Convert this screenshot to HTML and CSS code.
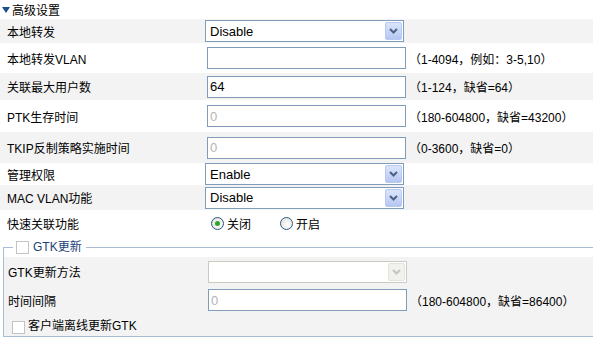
FILE: index.html
```html
<!DOCTYPE html>
<html lang="zh-CN">
<head>
    <meta charset="UTF-8">
    <meta name="viewport" content="width=device-width, initial-scale=1.0">
    <title>高级设置</title>
    <link rel="stylesheet" href="styles.css">
</head>
<body>
<div class="page">
    <div class="section-title"><span class="tri"></span>高级设置</div>

    <table class="form">
        <tr class="alt">
            <td class="lbl">本地转发</td>
            <td><div class="select"><span>Disable</span><span class="arrow"><svg width="9" height="6" viewBox="0 0 9 6"><path d="M1 1 L4.5 4.5 L8 1" /></svg></span></div></td>
        </tr>
        <tr>
            <td class="lbl">本地转发VLAN</td>
            <td><input class="text-input" type="text" value=""><span class="hint">（1-4094，例如：3-5,10）</span></td>
        </tr>
        <tr class="alt">
            <td class="lbl">关联最大用户数</td>
            <td><input class="text-input" type="text" value="64"><span class="hint">（1-124，缺省=64）</span></td>
        </tr>
        <tr>
            <td class="lbl">PTK生存时间</td>
            <td><input class="text-input off" type="text" value="0" readonly><span class="hint">（180-604800，缺省=43200）</span></td>
        </tr>
        <tr class="alt">
            <td class="lbl">TKIP反制策略实施时间</td>
            <td><input class="text-input off" type="text" value="0" readonly><span class="hint">（0-3600，缺省=0）</span></td>
        </tr>
        <tr>
            <td class="lbl">管理权限</td>
            <td><div class="select"><span>Enable</span><span class="arrow"><svg width="9" height="6" viewBox="0 0 9 6"><path d="M1 1 L4.5 4.5 L8 1" /></svg></span></div></td>
        </tr>
        <tr class="alt">
            <td class="lbl">MAC VLAN功能</td>
            <td><div class="select"><span>Disable</span><span class="arrow"><svg width="9" height="6" viewBox="0 0 9 6"><path d="M1 1 L4.5 4.5 L8 1" /></svg></span></div></td>
        </tr>
        <tr>
            <td class="lbl">快速关联功能</td>
            <td>
                <div class="radios">
                    <span class="radio"><span class="dot on"></span>关闭</span>
                    <span class="radio"><span class="dot"></span>开启</span>
                </div>
            </td>
        </tr>
    </table>

    <fieldset class="gtk">
        <legend><span class="cb"></span>GTK更新</legend>
        <table class="form inner">
            <tr>
                <td class="lbl">GTK更新方法</td>
                <td><div class="select off"><span></span><span class="arrow"><svg width="9" height="6" viewBox="0 0 9 6"><path d="M1 1 L4.5 4.5 L8 1" /></svg></span></div></td>
            </tr>
            <tr>
                <td class="lbl">时间间隔</td>
                <td><input class="text-input off" type="text" value="0" readonly><span class="hint">（180-604800，缺省=86400）</span></td>
            </tr>
            <tr>
                <td colspan="2" class="check-row"><span class="cb"></span>客户端离线更新GTK</td>
            </tr>
        </table>
    </fieldset>
</div>
</body>
</html>
```

FILE: styles.css
```css
* {
    box-sizing: border-box;
}
body {
    margin: 0;
    font-family: "Liberation Sans", "Noto Sans CJK SC", sans-serif;
    font-size: 12px;
    color: #000;
    background: #fff;
    overflow: hidden;
}
.page {
    width: 620px;
}
.section-title {
    height: 19px;
    display: flex;
    align-items: center;
    padding-left: 2px;
}
.tri {
    width: 0;
    height: 0;
    border-left: 4px solid transparent;
    border-right: 4px solid transparent;
    border-top: 6px solid #1d4f8e;
    margin-right: 2px;
}
.form {
    width: 100%;
    border-collapse: collapse;
}
.form td {
    padding: 0;
    vertical-align: middle;
}
.form .lbl {
    width: 205px;
    padding-left: 7px;
}
.form tr.alt {
    background: #f3f3f3;
}
.form tr:nth-child(1) { height: 24px; }
.form tr:nth-child(2) { height: 30px; }
.form tr:nth-child(3) { height: 27px; }
.form tr:nth-child(4) { height: 32px; }
.form tr:nth-child(5) { height: 31px; }
.form tr:nth-child(6) { height: 22px; }
.form tr:nth-child(7) { height: 25px; }
.form tr:nth-child(8) { height: 26px; }

.select {
    width: 199px;
    height: 22px;
    border: 1px solid #7f9db9;
    background: #fff;
    font-size: 13px;
    display: flex;
    align-items: center;
    justify-content: space-between;
    padding-left: 4px;
}
.arrow {
    width: 17px;
    height: 18px;
    margin-right: 1px;
    border: 1px solid #b8caf3;
    border-radius: 2px;
    background: linear-gradient(#dbe5fb, #b5c7f1);
    display: flex;
    align-items: center;
    justify-content: center;
}
.arrow path {
    fill: none;
    stroke: #4d6185;
    stroke-width: 2;
}
.select.off {
    border-color: #cbcac0;
}
.select.off .arrow {
    border-color: #e4e3dc;
    background: #f1f1ed;
}
.select.off .arrow path {
    stroke: #c4c4c0;
}

.text-input {
    width: 199px;
    height: 22px;
    margin: 0 0 0 2px;
    border: 1px solid #7f9db9;
    padding: 0 2px;
    font-family: "Liberation Sans", sans-serif;
    font-size: 13px;
    color: #000;
    vertical-align: middle;
    outline: none;
}
.text-input.off {
    color: #b4b4b4;
}
.hint {
    margin-left: 3px;
    vertical-align: middle;
}

.radios {
    display: flex;
    align-items: center;
    padding-left: 6px;
}
.radio {
    display: inline-flex;
    align-items: center;
    gap: 3px;
    margin-right: 29px;
}
.dot {
    width: 13px;
    height: 13px;
    border-radius: 50%;
    border: 1px solid #2b5a86;
    background: radial-gradient(circle at 60% 60%, #fff, #dedbd2);
    display: flex;
    align-items: center;
    justify-content: center;
}
.dot.on::after {
    content: "";
    width: 5px;
    height: 5px;
    border-radius: 50%;
    background: #2ea32e;
}

.cb {
    display: inline-block;
    width: 13px;
    height: 13px;
    border: 1px solid #c4c4c4;
    background: #fff;
}

.gtk {
    margin: 4px 0 0 3px;
    padding: 3px 0 0 0;
    border: 1px solid #a9bcd6;
    min-width: 0;
}
.gtk legend {
    margin-left: 9px;
    padding: 0 4px 0 3px;
    height: 14px;
    line-height: 14px;
    color: #1d3f78;
    display: flex;
    align-items: center;
    gap: 4px;
}
.inner {
    background: #f3f3f3;
}
.inner .lbl {
    width: 204px;
    padding-left: 4px;
}
.inner tr:nth-child(1) { height: 29px; }
.inner tr:nth-child(2) { height: 28px; }
.inner tr:nth-child(3) { height: 22px; }
.inner .text-input {
    margin-left: 0;
}
.check-row {
    padding-left: 8px !important;
}
.check-row .cb {
    margin-right: 3px;
    vertical-align: middle;
}
```
